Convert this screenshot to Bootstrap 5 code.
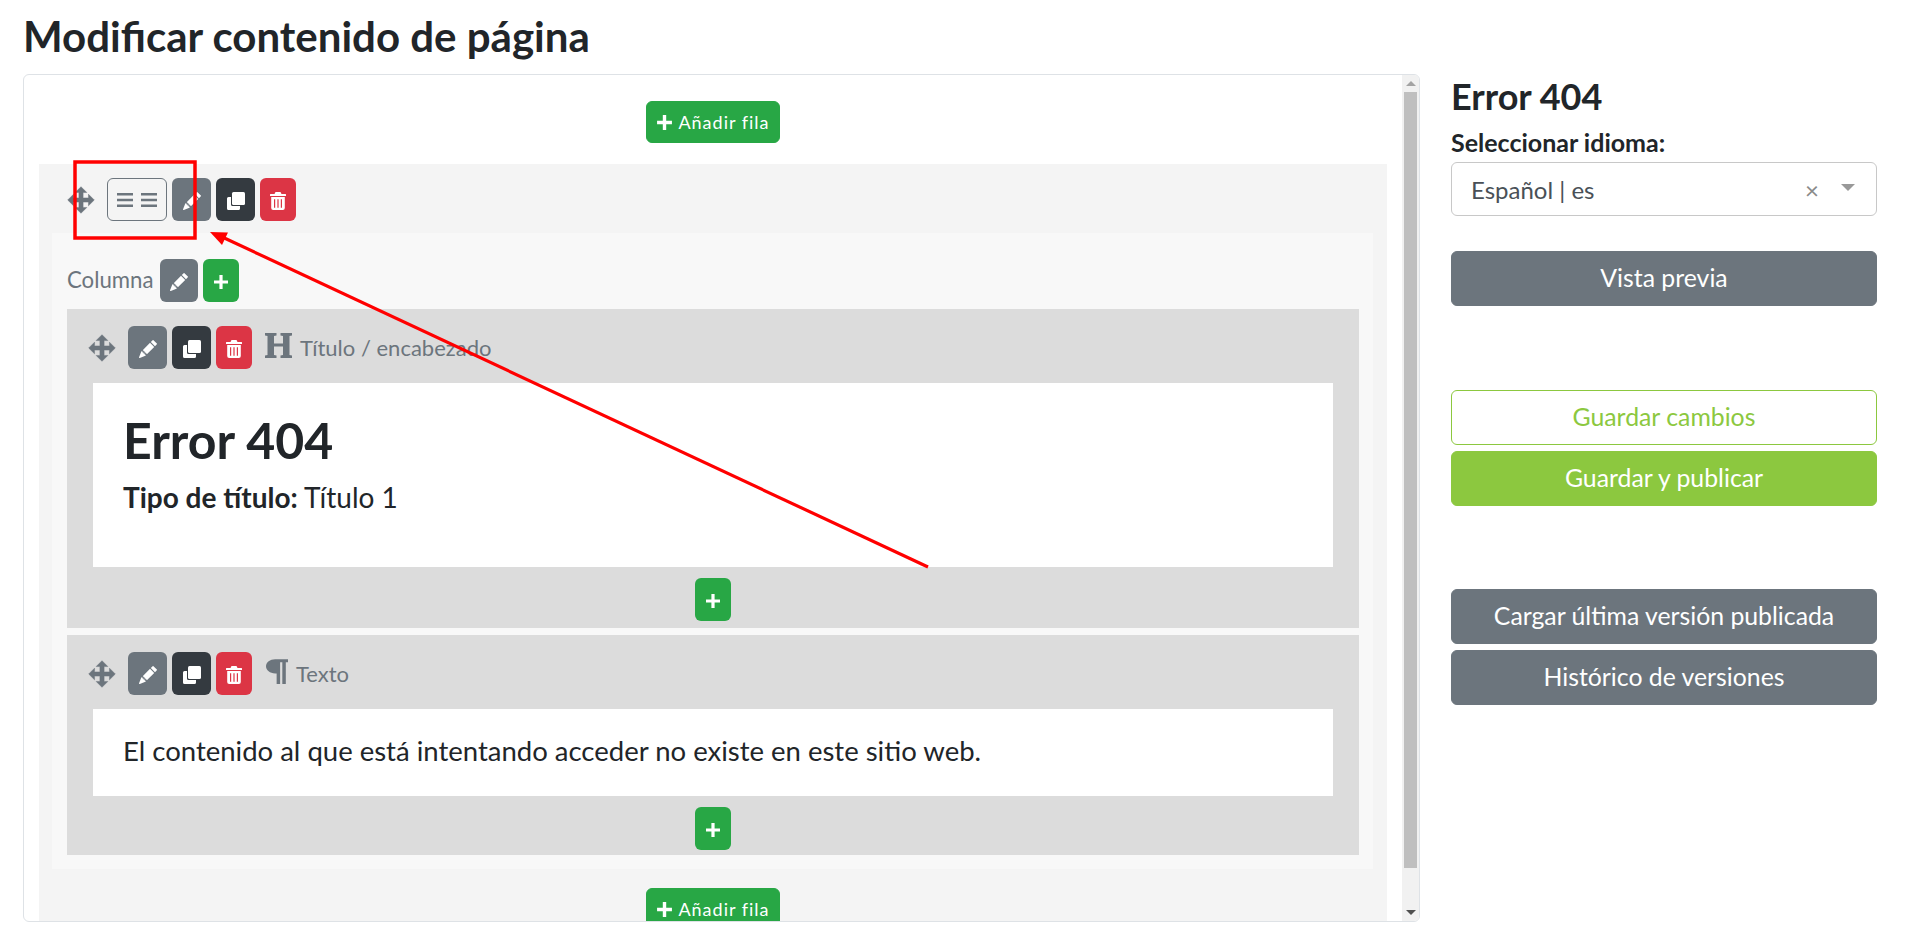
<!DOCTYPE html>
<html lang="es">
<head>
    <meta charset="UTF-8">
    <meta name="viewport" content="width=device-width, initial-scale=1.0">
    <title>Modificar contenido de página</title>
    <link href="https://cdn.jsdelivr.net/npm/bootstrap@5.3.0/dist/css/bootstrap.min.css" rel="stylesheet">
    <style>
        html, body { height: 100%; overflow: hidden; }
        body {
            font-family: Lato, "Liberation Sans", sans-serif;
            color: #212529;
            background: #fff;
            position: relative;
            padding: 13px 34px 0 23px;
        }
        .page-title { font-size: 42px; font-weight: 700; line-height: 46px; margin: 0 0 15px; }
        .main-line { gap: 31px; }
        .editor-box {
            width: 1397px;
            height: 848px;
            border: 1px solid #dee2e6;
            border-radius: 6px;
            overflow: hidden;
            background: #fff;
            flex: none;
        }
        .editor-pane { width: 1378px; flex: none; overflow: hidden; }
        .bar-side { width: 17px; flex: none; background: #f1f1f1; padding-top: 17px; position: relative; }
        .bar-thumb { height: 776px; margin: 0 2px; background: #bfbfbf; }
        .bar-up, .bar-down {
            position: absolute;
            left: 4px;
            width: 0;
            height: 0;
            border-left: 5px solid transparent;
            border-right: 5px solid transparent;
        }
        .bar-up { top: 6px; border-bottom: 5px solid #a3a3a3; }
        .bar-down { bottom: 6px; border-top: 5px solid #505050; }
        .add-row { padding: 26px 0 21px; }
        .add-row-end { padding: 19px 0 18px; }
        .btn-add {
            height: 42px;
            width: 134px;
            padding: 0;
            background: #28a745;
            border-color: #28a745;
            color: #fff;
            font-size: 18px;
            letter-spacing: 1px;
        }
        .btn-add svg { vertical-align: -2px; margin-right: 5px; }
        .row-block { background: #f4f4f4; margin: 0 15px 12px; padding-top: 14px; }
        .tool-line { height: 43px; }
        .row-tools { padding-left: 28px; gap: 5px; margin-bottom: 12px; }
        .col-block { background: #f8f8f8; margin: 0 14px 0 13px; padding: 26px 14px 14px 15px; }
        .col-tools { gap: 5px; margin-bottom: 7px; }
        .col-label { font-size: 22.2px; line-height: 38px; color: #6c757d; margin-right: 2px; padding-bottom: 2px; }
        .ico-btn {
            height: 43px;
            padding: 0;
            border: 0;
            border-radius: 6px;
            color: #fff;
            flex: none;
        }
        .w-39 { width: 39px; }
        .w-38 { width: 38px; }
        .w-36 { width: 36px; }
        .c-gray { background: #6c757d; }
        .c-dark { background: #343a40; }
        .c-red { background: #dc3545; }
        .c-green { background: #28a745; }
        .btn-cols {
            width: 60px;
            height: 43px;
            padding: 0;
            margin-left: 7px;
            border: 1px solid #6c757d;
            border-radius: 6px;
            background: transparent;
            color: #6c757d;
        }
        .move-ico { width: 28px; height: 28px; color: #6c757d; flex: none; }
        .el-block { background: #dcdcdc; padding: 17px 26px 7px 26px; }
        .el-block + .el-block { margin-top: 7px; padding-bottom: 5px; }
        .el-tools { gap: 5px; margin-bottom: 14px; margin-left: -5px; }
        .el-tools .ico-btn:first-of-type { margin-left: 7px; }
        .el-type { font-size: 22px; line-height: 40px; color: #6c757d; margin-left: 3px; }
        .h-ico { width: 27px; height: 25px; color: #6c757d; margin-left: 8px; margin-top: -4px; flex: none; }
        .p-ico { width: 22px; height: 27px; color: #6c757d; margin-left: 9px; margin-top: -5px; flex: none; }
        .el-body { background: #fff; padding: 27px 30px 0; }
        .el-title { height: 184px; }
        .el-text { height: 87px; font-size: 27.5px; line-height: 40px; padding-top: 22px; }
        .el-h { font-size: 50px; font-weight: 700; line-height: 60px; margin: 0 0 9px; }
        .el-meta { font-size: 28px; line-height: 36px; }
        .el-add { margin-top: 11px; }
        .side-col { width: 426px; flex: none; padding-top: 1px; }
        .side-h { font-size: 36px; font-weight: 700; line-height: 42px; margin: 0 0 11px; }
        .side-lbl { font-size: 25px; font-weight: 700; line-height: 28px; margin-bottom: 6px; display: block; }
        .lang-select {
            height: 54px;
            border: 1px solid #c8c8c8;
            border-radius: 6px;
            padding: 2px 21px 0 19px;
            font-size: 24px;
            color: #495057;
            margin-bottom: 35px;
        }
        .lang-x { color: #8a8a8a; font-size: 24px; line-height: 1; margin-right: 22px; }
        .lang-caret { width: 0; height: 0; border-left: 7px solid transparent; border-right: 7px solid transparent; border-top: 7px solid #999; margin-top: -5px; }
        .btn-side {
            display: block;
            width: 100%;
            height: 55px;
            padding: 0 0 2px;
            font-size: 24.8px;
            border-radius: 6px;
        }
        .btn-gris { background: #6c757d; border: 1px solid #6c757d; color: #fff; }
        .btn-lima { background: #8cc83f; border: 1px solid #8cc83f; color: #fff; }
        .btn-lima-out { background: #fff; border: 1px solid #8cc83f; color: #8cc83f; }
        .gap-a { margin-top: 84px; }
        .gap-c { margin-top: 83px; }
        .gap-b { margin-top: 6px; }
        .note-layer { position: absolute; left: 0; top: 0; width: 1911px; height: 939px; pointer-events: none; }
    </style>
</head>
<body>
    <!-- iconos -->
    <svg width="0" height="0" class="position-absolute">
        <symbol id="i-move" viewBox="0 0 24 24"><path fill="currentColor" stroke="currentColor" stroke-width=".4" stroke-linejoin="round" d="M12 .6 17 5.6H13.8V10.2H18.4V7L23.4 12 18.4 17V13.8H13.8V18.4H17L12 23.4 7 18.4H10.2V13.8H5.6V17L.6 12 5.6 7V10.2H10.2V5.6H7Z"/></symbol>
        <symbol id="i-pencil" viewBox="0 0 16 16"><path fill="currentColor" d="M12.854.146a.5.5 0 0 0-.707 0L10.5 1.793 14.207 5.5l1.647-1.646a.5.5 0 0 0 0-.708l-3-3zm.646 6.061L9.793 2.5 3.293 9H3.5a.5.5 0 0 1 .5.5v.5h.5a.5.5 0 0 1 .5.5v.5h.5a.5.5 0 0 1 .5.5v.5h.5a.5.5 0 0 1 .5.5v.207l6.5-6.5zm-7.468 7.468A.5.5 0 0 1 6 13.5V13h-.5a.5.5 0 0 1-.5-.5V12h-.5a.5.5 0 0 1-.5-.5V11h-.5a.5.5 0 0 1-.5-.5V10h-.5a.499.499 0 0 1-.175-.032l-.179.178a.5.5 0 0 0-.11.168l-2 5a.5.5 0 0 0 .65.65l5-2a.5.5 0 0 0 .168-.11l.178-.178z"/></symbol>
        <symbol id="i-clone" viewBox="0 0 18 18"><path fill="currentColor" d="M6.5 0H16.5A1.5 1.5 0 0 1 18 1.5V11.5A1.5 1.5 0 0 1 16.5 13H6.5A1.5 1.5 0 0 1 5 11.5V1.5A1.5 1.5 0 0 1 6.5 0Z"/><path fill="currentColor" d="M1.5 5H4V12.5A1.5 1.5 0 0 0 5.5 14H13V16.5A1.5 1.5 0 0 1 11.5 18H1.5A1.5 1.5 0 0 1 0 16.5V6.5A1.5 1.5 0 0 1 1.5 5Z"/></symbol>
        <symbol id="i-trash" viewBox="0 0 16 18"><path fill="currentColor" fill-rule="evenodd" d="M5.5 0H10.5L11.5 2H15.5A.5.5 0 0 1 16 2.5V4H0V2.5A.5.5 0 0 1 .5 2H4.5ZM1.2 5H14.8V16A2 2 0 0 1 12.8 18H3.2A2 2 0 0 1 1.2 16ZM4 7.2V15.8H5.2V7.2ZM7.4 7.2V15.8H8.6V7.2ZM10.8 7.2V15.8H12V7.2Z"/></symbol>
        <symbol id="i-plus" viewBox="0 0 16 16"><path fill="currentColor" d="M6.4 1H9.6V6.4H15V9.6H9.6V15H6.4V9.6H1V6.4H6.4Z"/></symbol>
        <symbol id="i-bars" viewBox="0 0 16 14"><path fill="currentColor" d="M0 0H16V2.4H0ZM0 5.8H16V8.2H0ZM0 11.6H16V14H0Z"/></symbol>
        <symbol id="i-head" viewBox="0 0 27 25"><path fill="currentColor" d="M0 0H11.5V2.4L9 3V10.6H18V3L15.5 2.4V0H27V2.4L24.5 3V22L27 22.6V25H15.5V22.6L18 22V13.6H9V22L11.5 22.6V25H0V22.6L2.5 22V3L0 2.4Z"/></symbol>
        <symbol id="i-para" viewBox="0 0 24 27"><path fill="currentColor" d="M10 0H24V3.4H21.6V27H17.8V3.4H15.4V27H11.6V15.6H10C4.4 15.6 0 12.2 0 7.8S4.4 0 10 0Z"/></symbol>
    </svg>

    <h1 class="page-title">Modificar contenido de página</h1>

    <div class="d-flex main-line">
        <div class="d-flex editor-box">
            <div class="editor-pane">
                <div class="text-center add-row">
                    <button type="button" class="btn btn-add"><svg width="17" height="17"><use href="#i-plus"/></svg>Añadir fila</button>
                </div>

                <div class="row-block">
                    <div class="d-flex align-items-center tool-line row-tools">
                        <svg class="move-ico"><use href="#i-move"/></svg>
                        <button type="button" class="btn-cols d-flex align-items-center justify-content-center gap-2"><svg width="16" height="14"><use href="#i-bars"/></svg><svg width="16" height="14"><use href="#i-bars"/></svg></button>
                        <button type="button" class="ico-btn w-39 c-gray"><svg width="18" height="18"><use href="#i-pencil"/></svg></button>
                        <button type="button" class="ico-btn w-39 c-dark"><svg width="18" height="18"><use href="#i-clone"/></svg></button>
                        <button type="button" class="ico-btn w-36 c-red"><svg width="16" height="18"><use href="#i-trash"/></svg></button>
                    </div>

                    <div class="col-block">
                        <div class="d-flex align-items-center tool-line col-tools">
                            <span class="col-label">Columna</span>
                            <button type="button" class="ico-btn w-38 c-gray"><svg width="18" height="18"><use href="#i-pencil"/></svg></button>
                            <button type="button" class="ico-btn w-36 c-green"><svg width="16" height="16"><use href="#i-plus"/></svg></button>
                        </div>

                        <div class="el-block">
                            <div class="d-flex align-items-center tool-line el-tools">
                                <svg class="move-ico"><use href="#i-move"/></svg>
                                <button type="button" class="ico-btn w-39 c-gray"><svg width="18" height="18"><use href="#i-pencil"/></svg></button>
                                <button type="button" class="ico-btn w-39 c-dark"><svg width="18" height="18"><use href="#i-clone"/></svg></button>
                                <button type="button" class="ico-btn w-36 c-red"><svg width="16" height="18"><use href="#i-trash"/></svg></button>
                                <svg class="h-ico"><use href="#i-head"/></svg>
                                <span class="el-type">Título / encabezado</span>
                            </div>
                            <div class="el-body el-title">
                                <h2 class="el-h">Error 404</h2>
                                <div class="el-meta"><b>Tipo de título:</b> Título 1</div>
                            </div>
                            <div class="text-center el-add">
                                <button type="button" class="ico-btn w-36 c-green"><svg width="16" height="16"><use href="#i-plus"/></svg></button>
                            </div>
                        </div>

                        <div class="el-block">
                            <div class="d-flex align-items-center tool-line el-tools">
                                <svg class="move-ico"><use href="#i-move"/></svg>
                                <button type="button" class="ico-btn w-39 c-gray"><svg width="18" height="18"><use href="#i-pencil"/></svg></button>
                                <button type="button" class="ico-btn w-39 c-dark"><svg width="18" height="18"><use href="#i-clone"/></svg></button>
                                <button type="button" class="ico-btn w-36 c-red"><svg width="16" height="18"><use href="#i-trash"/></svg></button>
                                <svg class="p-ico"><use href="#i-para"/></svg>
                                <span class="el-type">Texto</span>
                            </div>
                            <div class="el-body el-text">El contenido al que está intentando acceder no existe en este sitio web.</div>
                            <div class="text-center el-add">
                                <button type="button" class="ico-btn w-36 c-green"><svg width="16" height="16"><use href="#i-plus"/></svg></button>
                            </div>
                        </div>
                    </div>

                    <div class="text-center add-row-end">
                        <button type="button" class="btn btn-add"><svg width="17" height="17"><use href="#i-plus"/></svg>Añadir fila</button>
                    </div>
                </div>
            </div>
            <div class="bar-side">
                <span class="bar-up"></span>
                <div class="bar-thumb"></div>
                <span class="bar-down"></span>
            </div>
        </div>

        <div class="side-col">
            <h3 class="side-h">Error 404</h3>
            <label class="side-lbl">Seleccionar idioma:</label>
            <div class="d-flex align-items-center lang-select">
                <span class="flex-grow-1">Español | es</span>
                <span class="lang-x">×</span>
                <span class="lang-caret"></span>
            </div>
            <button type="button" class="btn-side btn-gris">Vista previa</button>
            <button type="button" class="btn-side btn-lima-out gap-a">Guardar cambios</button>
            <button type="button" class="btn-side btn-lima gap-b">Guardar y publicar</button>
            <button type="button" class="btn-side btn-gris gap-c">Cargar última versión publicada</button>
            <button type="button" class="btn-side btn-gris gap-b">Histórico de versiones</button>
        </div>
    </div>

    <!-- anotacion roja de la captura -->
    <svg class="note-layer" viewBox="0 0 1911 939">
        <rect x="75" y="162" width="120" height="76" fill="none" stroke="#f00" stroke-width="3.5"/>
        <line x1="928" y1="567" x2="220" y2="236" stroke="#f00" stroke-width="3.2"/>
        <path d="M210 232 228 232.5 222 245Z" fill="#f00"/>
    </svg>

    <script src="https://cdn.jsdelivr.net/npm/bootstrap@5.3.0/dist/js/bootstrap.bundle.min.js"></script>
</body>
</html>
